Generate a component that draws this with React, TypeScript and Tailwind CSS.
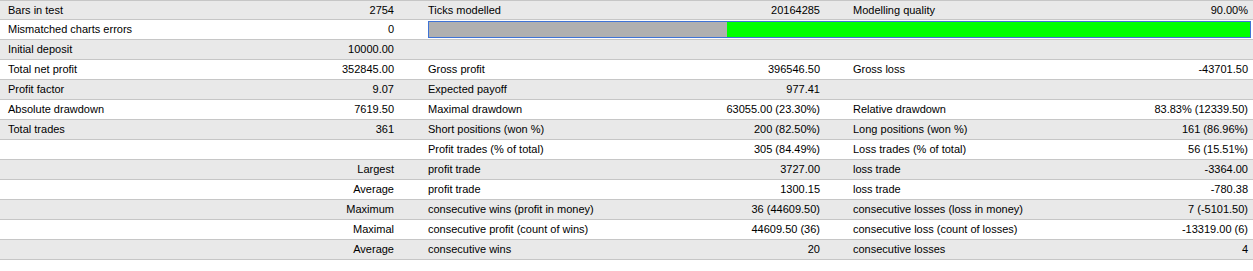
import React from 'react';

type Cell = { label?: string; value?: string };
type Row = { a: Cell; b?: Cell; c?: Cell; bar?: boolean };

const rows: Row[] = [
  { a: { label: 'Bars in test', value: '2754' }, b: { label: 'Ticks modelled', value: '20164285' }, c: { label: 'Modelling quality', value: '90.00%' } },
  { a: { label: 'Mismatched charts errors', value: '0' }, bar: true },
  { a: { label: 'Initial deposit', value: '10000.00' } },
  { a: { label: 'Total net profit', value: '352845.00' }, b: { label: 'Gross profit', value: '396546.50' }, c: { label: 'Gross loss', value: '-43701.50' } },
  { a: { label: 'Profit factor', value: '9.07' }, b: { label: 'Expected payoff', value: '977.41' } },
  { a: { label: 'Absolute drawdown', value: '7619.50' }, b: { label: 'Maximal drawdown', value: '63055.00 (23.30%)' }, c: { label: 'Relative drawdown', value: '83.83% (12339.50)' } },
  { a: { label: 'Total trades', value: '361' }, b: { label: 'Short positions (won %)', value: '200 (82.50%)' }, c: { label: 'Long positions (won %)', value: '161 (86.96%)' } },
  { a: {}, b: { label: 'Profit trades (% of total)', value: '305 (84.49%)' }, c: { label: 'Loss trades (% of total)', value: '56 (15.51%)' } },
  { a: { value: 'Largest' }, b: { label: 'profit trade', value: '3727.00' }, c: { label: 'loss trade', value: '-3364.00' } },
  { a: { value: 'Average' }, b: { label: 'profit trade', value: '1300.15' }, c: { label: 'loss trade', value: '-780.38' } },
  { a: { value: 'Maximum' }, b: { label: 'consecutive wins (profit in money)', value: '36 (44609.50)' }, c: { label: 'consecutive losses (loss in money)', value: '7 (-5101.50)' } },
  { a: { value: 'Maximal' }, b: { label: 'consecutive profit (count of wins)', value: '44609.50 (36)' }, c: { label: 'consecutive loss (count of losses)', value: '-13319.00 (6)' } },
  { a: { value: 'Average' }, b: { label: 'consecutive wins', value: '20' }, c: { label: 'consecutive losses', value: '4' } },
];

const Group = ({ cell, className }: { cell?: Cell; className: string }) => (
  <div className={`flex items-center justify-between ${className}`}>
    <span>{cell?.label ?? ''}</span>
    <span>{cell?.value ?? ''}</span>
  </div>
);

export default function App() {
  return (
    <div className="w-[1253px] h-[271px] bg-white text-black text-[11px] leading-none" style={{ fontFamily: '"Liberation Sans", Arial, sans-serif' }}>
      <div className="border-t border-[#c6c6c6]">
        {rows.map((r, i) => (
          <div
            key={i}
            className={`flex border-b border-[#c6c6c6] ${i === 0 ? 'h-[19px]' : 'h-[20px]'} ${i % 2 === 0 ? 'bg-[#e9e9e9]' : 'bg-white'}`}
          >
            <Group cell={r.a} className="w-[400px] pl-[8px] pr-[6px]" />
            {r.bar ? (
              <div className="flex items-center pl-[28px] pr-[2px] flex-1">
                <div className="flex h-[17px] w-full border border-[#3f73d6]">
                  <div className="w-[298px] bg-[#b0b0b0]" />
                  <div className="flex-1 bg-[#00ff00]" />
                </div>
              </div>
            ) : (
              <>
                <Group cell={r.b} className="w-[426px] pl-[28px] pr-[6px]" />
                <Group cell={r.c} className="w-[427px] pl-[27px] pr-[5px]" />
              </>
            )}
          </div>
        ))}
      </div>
    </div>
  );
}
